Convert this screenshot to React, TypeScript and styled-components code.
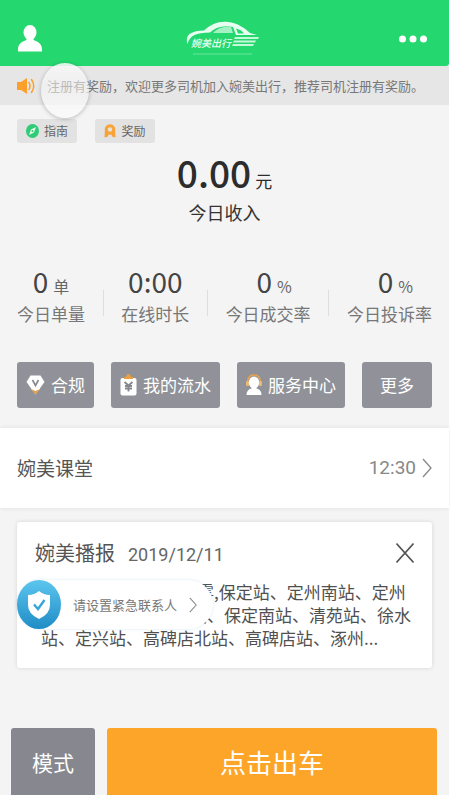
import React from "react";
import styled, { createGlobalStyle } from "styled-components";

const GlobalStyle = createGlobalStyle`
  * { box-sizing: border-box; }
  body {
    margin: 0;
    background: #fff;
    font-family: "Noto Sans CJK SC", "Noto Sans", sans-serif;
    color: #444;
  }
  button { font-family: inherit; border: 0; padding: 0; margin: 0; cursor: pointer; }
  h1, h2, p, ul { margin: 0; padding: 0; font-weight: 400; }
  svg { display: block; flex: none; }
`;

const Page = styled.div`
  min-height: 100vh;
  display: flex;
  flex-direction: column;
  border-right: 1px solid #fff;
  border-bottom: 5px solid #fff;
  background: #f4f4f4;
`;

const Header = styled.header`
  height: 66px;
  padding: 11px 22px 0 18px;
  display: grid;
  grid-template-columns: 1fr auto 1fr;
  align-items: center;
  background: #25d76f;
  border-bottom-right-radius: 3px;
`;

const IconButton = styled.button<{ $end?: boolean }>`
  background: none;
  justify-self: ${(p) => (p.$end ? "end" : "start")};
`;

const LogoText = styled.text`
  font-family: "Noto Sans CJK SC", sans-serif;
  font-size: 10px;
  font-weight: 500;
  font-style: italic;
  fill: #eafff2;
`;

const Notice = styled.div`
  position: relative;
  height: 39px;
  padding-left: 17px;
  display: flex;
  align-items: center;
  gap: 12px;
  background: #e6e6e6;
`;

const NoticeText = styled.p`
  font-size: 13px;
  line-height: 20px;
  color: #777;
  white-space: nowrap;
  overflow: hidden;
`;

const AssistiveTouch = styled.div`
  position: absolute;
  left: 41px;
  top: -3px;
  width: 48px;
  height: 55px;
  border-radius: 50%;
  background: linear-gradient(rgba(248, 248, 248, 0.9), rgba(248, 248, 248, 0.5) 40%, rgba(250, 250, 250, 0.8));
  box-shadow: 0 1px 4px rgba(0, 0, 0, 0.25);
`;

const Tags = styled.nav`
  display: flex;
  gap: 18px;
  padding: 14px 17px 0;
`;

const Tag = styled.button`
  width: 60px;
  height: 24px;
  display: flex;
  align-items: center;
  justify-content: center;
  gap: 5px;
  border-radius: 3px;
  background: #e2e2e2;
  color: #666;
  font-size: 12px;
  line-height: 18px;
`;

const Income = styled.section`
  padding-top: 2px;
  text-align: center;
  color: #333;
`;

const IncomeValue = styled.p`
  display: flex;
  justify-content: center;
  align-items: baseline;
  gap: 4px;
  font-size: 37px;
  font-weight: 500;
  line-height: 54px;
  color: #2c2c2c;
`;

const IncomeUnit = styled.span`
  font-size: 17px;
  font-weight: 400;
  line-height: 24px;
`;

const IncomeLabel = styled.p`
  font-size: 18px;
  line-height: 26px;
`;

const Stats = styled.section`
  display: flex;
  justify-content: space-between;
  align-items: flex-end;
  padding: 36px 17px 0;
`;

const Stat = styled.div`
  text-align: center;
`;

const StatValue = styled.p<{ $indent: boolean }>`
  display: flex;
  justify-content: center;
  align-items: baseline;
  gap: 5px;
  padding-left: ${(p) => (p.$indent ? 12 : 0)}px;
  font-size: 28px;
  line-height: 40px;
  color: #444;
`;

const StatUnit = styled.span`
  font-size: 16px;
  line-height: 20px;
  color: #666;
`;

const StatLabel = styled.p`
  font-size: 17px;
  line-height: 26px;
  color: #777;
`;

const Divider = styled.span`
  width: 1px;
  height: 26px;
  margin-bottom: 11px;
  background: #dedede;
`;

const Actions = styled.nav`
  display: flex;
  justify-content: space-between;
  padding: 35px 17px 0;
`;

const Action = styled.button`
  height: 46px;
  padding: 0 9px;
  display: flex;
  align-items: center;
  gap: 6px;
  border-radius: 3px;
  background: #919299;
  color: #fff;
  font-size: 17px;
  line-height: 24px;
`;

const MoreAction = styled(Action)`
  padding: 0 18px;
`;

const Lesson = styled.a`
  height: 80px;
  margin-top: 20px;
  padding: 0 17px;
  display: flex;
  align-items: center;
  background: #fff;
  box-shadow: 0 0 4px rgba(0, 0, 0, 0.1);
  color: #555;
  font-size: 19px;
  line-height: 28px;
  text-decoration: none;
`;

const LessonTime = styled.time`
  margin-left: auto;
  margin-right: 6px;
  font-family: Roboto, sans-serif;
  color: #888;
`;

const Bulletin = styled.section`
  position: relative;
  height: 146px;
  margin: 14px 17px 0;
  padding: 16px 18px 0;
  border-radius: 3px;
  background: #fff;
  box-shadow: 0 0 4px rgba(0, 0, 0, 0.13);
`;

const BulletinHead = styled.div`
  display: flex;
  align-items: center;
`;

const BulletinTitle = styled.h2`
  font-size: 20px;
  line-height: 28px;
  color: #555;
`;

const BulletinDate = styled.time`
  padding-top: 5px;
  margin-left: 13px;
  font-family: Roboto, sans-serif;
  font-size: 18px;
  line-height: 24px;
  color: #666;
`;

const CloseButton = styled(IconButton)`
  margin-left: auto;
`;

const BulletinBody = styled.p`
  margin: 13px 0 0 6px;
  font-size: 17px;
  line-height: 23px;
  color: #505050;
  white-space: nowrap;
`;

const Line = styled.span<{ $start?: number }>`
  display: block;
  padding-left: ${(p) => p.$start ?? 0}px;
`;

const Contact = styled.button`
  position: absolute;
  left: 0;
  top: 58px;
  width: 196px;
  height: 49px;
  display: flex;
  align-items: center;
  gap: 12px;
  border-radius: 25px;
  background: #fff;
  box-shadow: 0 0 3px rgba(130, 190, 220, 0.35);
  color: #777;
  font-size: 13px;
  line-height: 20px;
  white-space: nowrap;
`;

const Shield = styled.span`
  width: 44px;
  height: 49px;
  display: flex;
  align-items: center;
  justify-content: center;
  border-radius: 50%;
  background: linear-gradient(#5cc6ee, #1f8cc6);
`;

const Footer = styled.footer`
  display: flex;
  gap: 12px;
  margin-top: auto;
  padding: 20px 12px 0 11px;
`;

const ModeButton = styled.button`
  width: 84px;
  height: 67px;
  border-radius: 3px 3px 0 0;
  background: #87888f;
  color: #fff;
  font-size: 21px;
  line-height: 30px;
`;

const StartButton = styled(ModeButton)`
  flex: 1;
  background: #fda529;
  font-size: 26px;
  line-height: 38px;
`;

const UserIcon = () => (
  <svg width="24" height="27" viewBox="0 0 24 27" fill="#fff">
    <ellipse cx="12" cy="7.5" rx="6.5" ry="7.5" />
    <path d="M8.5 12h7v3c5 1.500 8.500 4.500 8.500 9v2.500H0V24c0-4.500 3.500-7.500 8.500-9z" />
  </svg>
);

const Logo = () => (
  <svg width="74" height="36" viewBox="0 0 74 36" role="img" aria-label="婉美出行">
    <path
      d="M1.500 23C-1 15 3 10 18 9.500C25 3 33 0 42 1C52 2 60 8 64 12L71 14H50L47 6Q33 3 24 11.500C10 12 4 14 1.500 23Z"
      fill="#e6fff0"
    />
    <path d="M27 12C32 7 37 5 45 6L47 12Z" fill="#a4f1c4" />
    <path d="M50 7.500Q56 9 58 12.500L52 12.500Z" fill="#25d76f" />
    <LogoText x="5" y="26">婉美出行</LogoText>
    <path d="M49 16H73L72 18H48ZM48 19.500H70L69 21.500H47ZM47 23H68L67 25H46Z" fill="#c5f9d9" />
    <path d="M7 33H66" stroke="#6de59d" strokeWidth="1" />
  </svg>
);

const MoreIcon = () => (
  <svg width="28" height="8" viewBox="0 0 28 8" fill="#fff">
    <circle cx="3.500" cy="4" r="3.500" />
    <circle cx="14" cy="4" r="3.500" />
    <circle cx="24.500" cy="4" r="3.500" />
  </svg>
);

const SpeakerIcon = () => (
  <svg width="18" height="18" viewBox="0 0 18 18" fill="none">
    <path d="M0 5H4L10 1V17L4 13H0Z" fill="#fda02b" />
    <path d="M12 5.500Q14 9 12 12.500M14.500 2.500Q19 9 14.500 15.500" stroke="#fda02b" strokeWidth="1.500" strokeLinecap="round" />
  </svg>
);

const CompassIcon = () => (
  <svg width="13" height="14" viewBox="0 0 13 14">
    <ellipse cx="6.500" cy="7" rx="6.500" ry="7" fill="#2fcb76" />
    <path d="M10 3L8 8.500L3 11L5 5.500Z" fill="#e8f7ee" />
    <circle cx="6.500" cy="7" r="1" fill="#2fcb76" />
  </svg>
);

const MedalIcon = () => (
  <svg width="12" height="14" viewBox="0 0 12 14">
    <path d="M1 5L0.500 13.500L4 12.500L4.500 10H7.500L8 12.500L11.500 13.500L11 5Z" fill="#f9a235" />
    <circle cx="6" cy="5.500" r="5.300" fill="#f9a235" />
    <circle cx="6" cy="5.500" r="2.200" fill="#e6e2dc" />
  </svg>
);

const GemIcon = () => (
  <svg width="19" height="20" viewBox="0 0 19 20">
    <path d="M4.500 0.500H14.500L18.500 7L9.500 19.500L0.500 7Z" fill="#fff" />
    <path d="M5 14H14L9.500 19.500Z" fill="#e3a04b" />
    <path d="M5 14L9.500 16L14 14L12 12H7Z" fill="#fff" />
    <path d="M6.500 5L9.500 10.500L12.500 5" fill="none" stroke="#858690" strokeWidth="1.600" />
  </svg>
);

const ClipboardIcon = () => (
  <svg width="17" height="22" viewBox="0 0 17 22">
    <rect x="0.500" y="4" width="16" height="17.500" rx="2" fill="#fff" />
    <path d="M4 5V3H6Q6.500 0 8.500 0T11 3H13V5Z" fill="#e8a040" />
    <path d="M4.500 8L8.500 11.500L12.500 8M5 12H12M5 14.500H12M8.500 11V17.500" fill="none" stroke="#858690" strokeWidth="1.800" />
  </svg>
);

const ServiceIcon = () => (
  <svg width="16" height="22" viewBox="0 0 16 22">
    <path d="M1.500 9Q1.500 1 8 1T14.500 9" fill="none" stroke="#e8a448" strokeWidth="1.600" />
    <rect x="0" y="7" width="3" height="5" rx="1" fill="#e8b878" />
    <rect x="13" y="7" width="3" height="5" rx="1" fill="#e8b878" />
    <ellipse cx="8" cy="8.500" rx="5.200" ry="6" fill="#fff" />
    <path d="M5.500 13H10.500V14.500Q15.500 15.500 15.500 21H0.500Q0.500 15.500 5.500 14.500Z" fill="#fff" />
  </svg>
);

const Chevron = ({ width, height }: { width: number; height: number }) => (
  <svg width={width} height={height} viewBox="0 0 10 20" fill="none">
    <path d="M1 1L9 10L1 19" stroke="#888" strokeWidth="1.300" />
  </svg>
);

const CloseIcon = () => (
  <svg width="18" height="20" viewBox="0 0 18 20" fill="none">
    <path d="M0.500 0.500L17.500 19.500M17.500 0.500L0.500 19.500" stroke="#555" strokeWidth="1.600" />
  </svg>
);

const ShieldIcon = () => (
  <svg width="24" height="28" viewBox="0 0 24 28" fill="none">
    <path d="M12 0Q16.500 4 23 4V14Q23 23 12 28Q1 23 1 14V4Q7.500 4 12 0Z" fill="#fff" />
    <path d="M7 13.500L11 18L17.500 9" stroke="#38a5d8" strokeWidth="2.400" />
  </svg>
);

const stats = [
  { value: "0", unit: "单", label: "今日单量" },
  { value: "0:00", unit: "", label: "在线时长" },
  { value: "0", unit: "%", label: "今日成交率" },
  { value: "0", unit: "%", label: "今日投诉率" },
];

export default function App() {
  return (
    <>
      <GlobalStyle />
      <Page>
        <Header>
          <IconButton aria-label="个人中心"><UserIcon /></IconButton>
          <Logo />
          <IconButton $end aria-label="菜单"><MoreIcon /></IconButton>
        </Header>
        <Notice>
          <SpeakerIcon />
          <NoticeText>注册有奖励，欢迎更多司机加入婉美出行，推荐司机注册有奖励。</NoticeText>
          <AssistiveTouch />
        </Notice>
        <Tags>
          <Tag><CompassIcon />指南</Tag>
          <Tag><MedalIcon />奖励</Tag>
        </Tags>
        <Income>
          <IncomeValue>0.00<IncomeUnit>元</IncomeUnit></IncomeValue>
          <IncomeLabel>今日收入</IncomeLabel>
        </Income>
        <Stats>
          {stats.map((s, i) => (
            <React.Fragment key={s.label}>
              {i > 0 && <Divider />}
              <Stat>
                <StatValue $indent={s.unit === "%"}>
                  {s.value}
                  {s.unit && <StatUnit>{s.unit}</StatUnit>}
                </StatValue>
                <StatLabel>{s.label}</StatLabel>
              </Stat>
            </React.Fragment>
          ))}
        </Stats>
        <Actions>
          <Action><GemIcon />合规</Action>
          <Action><ClipboardIcon />我的流水</Action>
          <Action><ServiceIcon />服务中心</Action>
          <MoreAction>更多</MoreAction>
        </Actions>
        <Lesson href="#lesson">
          婉美课堂
          <LessonTime>12:30</LessonTime>
          <Chevron width={10} height={20} />
        </Lesson>
        <Bulletin>
          <BulletinHead>
            <BulletinTitle>婉美播报</BulletinTitle>
            <BulletinDate>2019/12/11</BulletinDate>
            <CloseButton aria-label="关闭"><CloseIcon /></CloseButton>
          </BulletinHead>
          <BulletinBody>
            <Line $start={156}>雾,保定站、定州南站、定州</Line>
            <Line $start={149}>站、保定南站、清苑站、徐水</Line>
            <Line>站、定兴站、高碑店北站、高碑店站、涿州...</Line>
          </BulletinBody>
          <Contact>
            <Shield><ShieldIcon /></Shield>
            请设置紧急联系人
            <Chevron width={8} height={16} />
          </Contact>
        </Bulletin>
        <Footer>
          <ModeButton>模式</ModeButton>
          <StartButton>点击出车</StartButton>
        </Footer>
      </Page>
    </>
  );
}
